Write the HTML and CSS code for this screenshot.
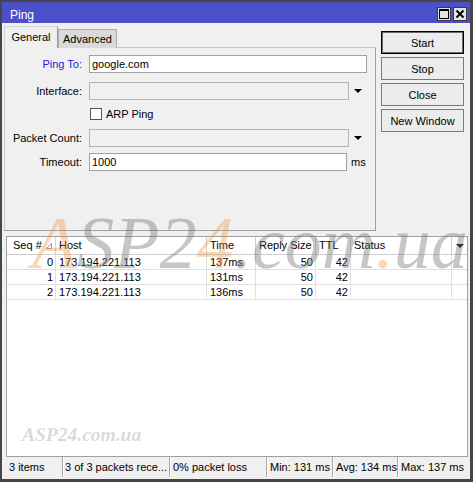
FILE: index.html
```html
<!DOCTYPE html>
<html>
<head>
<meta charset="utf-8">
<link rel="stylesheet" href="styles.css">
</head>
<body>
<div class="window">
  <div class="titlebar">
    <span class="title">Ping</span>
    <div class="tb-btns">
      <span class="tb-btn"><svg width="12" height="12" viewBox="0 0 12 12"><rect x="1.5" y="1.5" width="9" height="9" fill="none" stroke="#000" stroke-width="1"/><rect x="1" y="1" width="10" height="2" fill="#000"/></svg></span>
      <span class="tb-btn"><svg width="12" height="12" viewBox="0 0 12 12"><path d="M2.5 2.5 L9.5 9.5 M9.5 2.5 L2.5 9.5" stroke="#000" stroke-width="2"/></svg></span>
    </div>
  </div>
  <div class="body">
    <div class="top">
      <div class="left">
        <div class="tabs">
          <div class="tab active">General</div>
          <div class="tab">Advanced</div>
        </div>
        <div class="panel">
          <div class="frow">
            <span class="lbl blue">Ping To:</span>
            <span class="inp w-full">google.com</span>
          </div>
          <div class="frow gap9">
            <span class="lbl">Interface:</span>
            <span class="inp dis w-drop"></span>
            <span class="drop"></span>
          </div>
          <div class="frow chk">
            <span class="lbl"></span>
            <span class="box"></span>
            <span class="chklbl">ARP Ping</span>
          </div>
          <div class="frow">
            <span class="lbl">Packet Count:</span>
            <span class="inp dis w-drop"></span>
            <span class="drop"></span>
          </div>
          <div class="frow gap6">
            <span class="lbl">Timeout:</span>
            <span class="inp w-ms">1000</span>
            <span class="unit">ms</span>
          </div>
        </div>
      </div>
      <div class="buttons">
        <div class="btn default">Start</div>
        <div class="btn">Stop</div>
        <div class="btn">Close</div>
        <div class="btn">New Window</div>
      </div>
    </div>
    <div class="table">
      <div class="grid head">
        <div class="c seqh">Seq #<svg class="sort" width="6" height="6" viewBox="0 0 6 6"><path d="M0.5 5.5 L5.5 5.5 L5.5 0.5 Z" fill="none" stroke="#9a9a9a" stroke-width="1"/></svg></div>
        <div class="c">Host</div>
        <div class="c">Time</div>
        <div class="c">Reply Size</div>
        <div class="c">TTL</div>
        <div class="c">Status</div>
        <div class="c hdrop"><span class="tri"></span></div>
      </div>
      <div class="grid row">
        <div class="c r">0</div><div class="c">173.194.221.113</div><div class="c">137ms</div><div class="c r">50</div><div class="c r">42</div><div class="c"></div><div class="c"></div>
      </div>
      <div class="grid row">
        <div class="c r">1</div><div class="c">173.194.221.113</div><div class="c">131ms</div><div class="c r">50</div><div class="c r">42</div><div class="c"></div><div class="c"></div>
      </div>
      <div class="grid row">
        <div class="c r">2</div><div class="c">173.194.221.113</div><div class="c">136ms</div><div class="c r">50</div><div class="c r">42</div><div class="c"></div><div class="c"></div>
      </div>
    </div>
    <div class="status">
      <div class="sc s1">3 items</div>
      <div class="sc s2">3 of 3 packets rece...</div>
      <div class="sc s3">0% packet loss</div>
      <div class="sc s4">Min: 131 ms</div>
      <div class="sc s5">Avg: 134 ms</div>
      <div class="sc s6">Max: 137 ms</div>
    </div>
  </div>
  <div class="wm-big"><span class="or">A</span>SP2<span class="or">4</span>.com<span class="or">.</span>ua</div>
  <div class="wm-small">ASP24.com.ua</div>
</div>
</body>
</html>
```
FILE: styles.css
```css
* { box-sizing: border-box; }
body { margin: 0; font-family: "Liberation Sans", Arial, sans-serif; font-size: 11px; color: #000; }

.window {
  position: relative;
  width: 473px; height: 482px;
  border-style: solid; border-color: #464646;
  border-width: 2px 3px 3px 2px;
  background: #f0f0f0;
  display: flex; flex-direction: column;
  overflow: hidden;
}
.titlebar {
  height: 21px; background: #4b50c8; color: #fff;
  display: flex; align-items: center; justify-content: space-between;
  padding: 2px 3px 0 8px;
}
.title { font-size: 12px; padding-top: 2px; }
.tb-btns { display: flex; gap: 2px; }
.tb-btn {
  width: 14px; height: 14px; background: #e4e4e4; border: 1px solid #3a3a3a;
  display: flex; align-items: center; justify-content: center;
}

.body { flex: 1; display: flex; flex-direction: column; padding: 3px 0 2px 0; }
.top { display: flex; height: 205px; }
.left { margin-left: 2px; width: 372px; display: flex; flex-direction: column; }
.tabs { display: flex; align-items: flex-end; height: 22px; margin-bottom: -1px; position: relative; z-index: 1; }
.tab {
  width: 59px; height: 19px; background: #dadada;
  border: 1px solid #adadad; border-bottom: none;
  display: flex; align-items: center; justify-content: center;
}
.tab.active {
  width: 54px; height: 22px; background: #f0f0f0;
  border-color: #d4d4d4 #9a9a9a #f0f0f0 #d4d4d4;
  padding-bottom: 1px;
}
.panel {
  height: 184px; border: 1px solid #a0a0a0; border-top-color: #c8c8c8; border-left-color: #c8c8c8;
  background: #f0f0f0; padding-top: 7px;
  display: flex; flex-direction: column;
}
.frow { display: flex; align-items: center; height: 18px; }
.gap9 { margin-top: 9px; }
.gap6 { margin-top: 6px; }
.chk { height: 29px; padding-bottom: 2px; }
.lbl { width: 77px; margin-right: 7px; text-align: right; }
.blue { color: #1c1ce6; }
.inp {
  height: 18px; border: 1px solid #a0a0a0; background: #fff;
  padding: 0 2px; line-height: 16px;
}
.inp.dis { background: #f0f0f0; border-color: #b4b4b4; }
.w-full { width: 278px; }
.w-drop { width: 260px; }
.w-ms { width: 258px; }
.drop {
  margin-left: 5px; margin-top: -1px;
  width: 0; height: 0;
  border-left: 4px solid transparent; border-right: 4px solid transparent;
  border-top: 4px solid #000;
}
.box { width: 12px; height: 12px; border: 1px solid #555; background: #fff; margin-left: 1px; }
.chklbl { margin-left: 4px; }
.unit { margin-left: 4px; }

.buttons { margin-left: 5px; margin-top: 5px; width: 83px; display: flex; flex-direction: column; gap: 3px; }
.btn {
  height: 23px; border: 1px solid #7a7a7a; background: #ececec;
  display: flex; align-items: center; justify-content: center;
}
.btn.default { border-color: #000; box-shadow: inset 0 0 0 1px #6a6a6a; }

.table {
  margin-top: 5px; margin-left: 4px; width: 462px; height: 221px;
  border: 1px solid #a0a0a0; background: #fff;
}
.grid { display: grid; grid-template-columns: 49px 151px 49px 60px 35px 101px 15px; }
.head { height: 18px; border-bottom: 1px solid #d0d0d0; }
.head .c { border-right: 1px solid #cfcfcf; padding-left: 3px; line-height: 17px; }
.head .seqh { padding-left: 6px; display: flex; align-items: center; gap: 4px; }
.sort { margin-top: 0; }
.head .hdrop { border-right: none; display: flex; align-items: center; justify-content: center; padding: 0; }
.tri { width: 0; height: 0; border-left: 4px solid transparent; border-right: 4px solid transparent; border-top: 4px solid #000; }
.row { height: 15px; border-bottom: 1px solid #e0e0e0; }
.row .c { border-right: 1px solid #e0e0e0; padding-left: 3px; line-height: 14px; white-space: nowrap; }
.row .c:last-child { border-right: none; }
.row .c.r { text-align: right; padding-left: 0; padding-right: 2px; }

.status { height: 20px; margin-left: 4px; display: flex; }
.sc {
  border-left: 1px solid #a8a8a8; box-shadow: inset 1px 0 0 #fff;
  padding-left: 3px; line-height: 20px; white-space: nowrap; overflow: hidden;
}
.s1 { width: 56px; border-left: none; box-shadow: none; }
.s2 { width: 107px; padding-left: 2px; }
.s3 { width: 97px; }
.s4 { width: 66px; }
.s5 { width: 65px; }
.s6 { width: 70px; }

.wm-big {
  position: absolute; left: 30px; top: 204px;
  font-family: "Liberation Serif", "Times New Roman", serif; font-style: italic;
  font-size: 74px; line-height: 74px; white-space: nowrap;
  color: rgba(120,120,120,0.42); pointer-events: none;
}
.wm-big .or { color: rgba(242,150,70,0.38); }
.wm-small {
  position: absolute; left: 20px; top: 423px;
  font-family: "Liberation Serif", "Times New Roman", serif; font-style: italic; font-weight: bold;
  font-size: 19.5px; line-height: 19.5px; color: rgba(150,150,150,0.35);
}
```
